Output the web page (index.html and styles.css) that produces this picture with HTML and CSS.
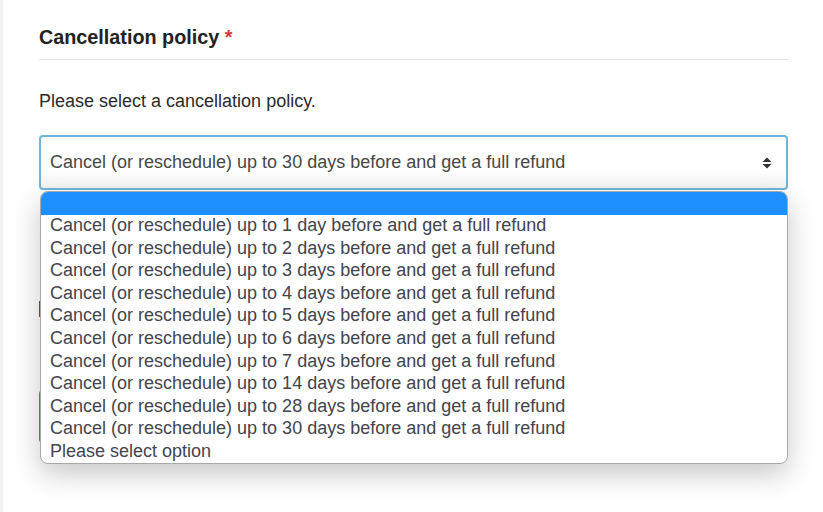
FILE: index.html
```html
<!DOCTYPE html>
<html lang="en">
<head>
  <meta charset="UTF-8" />
  <meta name="viewport" content="width=device-width, initial-scale=1.0"/>
  <title>Cancellation policy</title>
  <link rel="stylesheet" href="styles.css">
</head>
<body>
  <div class="side-strip"></div>

  <div class="page">
    <h2 class="field-title">Cancellation policy <span class="required">*</span></h2>

    <p class="field-help">Please select a cancellation policy.</p>

    <div class="select-wrap">
      <div class="select-box">
        <span class="select-value">Cancel (or reschedule) up to 30 days before and get a full refund</span>
        <svg class="select-arrows" width="10" height="12" viewBox="0 0 10 12">
          <path d="M5 0.5 L9.5 5 L0.5 5 Z" fill="#333"/>
          <path d="M0.5 7 L9.5 7 L5 11.5 Z" fill="#333"/>
        </svg>
      </div>

      <ul class="dropdown">
        <li class="option active">&nbsp;</li>
        <li class="option">Cancel (or reschedule) up to 1 day before and get a full refund</li>
        <li class="option">Cancel (or reschedule) up to 2 days before and get a full refund</li>
        <li class="option">Cancel (or reschedule) up to 3 days before and get a full refund</li>
        <li class="option">Cancel (or reschedule) up to 4 days before and get a full refund</li>
        <li class="option">Cancel (or reschedule) up to 5 days before and get a full refund</li>
        <li class="option">Cancel (or reschedule) up to 6 days before and get a full refund</li>
        <li class="option">Cancel (or reschedule) up to 7 days before and get a full refund</li>
        <li class="option">Cancel (or reschedule) up to 14 days before and get a full refund</li>
        <li class="option">Cancel (or reschedule) up to 28 days before and get a full refund</li>
        <li class="option">Cancel (or reschedule) up to 30 days before and get a full refund</li>
        <li class="option">Please select option</li>
      </ul>
    </div>

    <!-- covered by the open dropdown, only their left edges peek out -->
    <div class="field-error"></div>
    <button class="btn-danger" aria-label="Delete"></button>
  </div>
</body>
</html>
```

FILE: styles.css
```css
body {
  font-family: "Liberation Sans", Arial, sans-serif;
  background: #fff;
  margin: 0;
  padding: 0;
  display: flex;
  min-height: 100vh;
  overflow: hidden;
}

.side-strip {
  width: 3px;
  background: #f2f2f2;
  flex-shrink: 0;
}

.page {
  flex: 1;
  padding: 25px 35px 0 36px;
}

.field-title {
  margin: 0;
  font-size: 19.8px;
  line-height: 24px;
  font-weight: bold;
  color: #222;
  padding-bottom: 10px;
  border-bottom: 1px solid #e3e3e3;
}

.required {
  color: #d9343a;
}

.field-help {
  margin: 30px 0 0;
  font-size: 18px;
  line-height: 22px;
  color: #2b2b2b;
}

.select-wrap {
  position: relative;
  margin-top: 23px;
}

.select-box {
  height: 51px;
  border: 2px solid #70b6d6;
  border-radius: 4px;
  background: linear-gradient(to bottom, #fff 65%, #f4f4f4);
  display: flex;
  align-items: center;
  justify-content: space-between;
  padding: 0 14px 0 9px;
}

.select-value {
  font-size: 18px;
  color: #474747;
}

.select-arrows {
  display: block;
}

/* native-looking popup that lies over the form */
.dropdown {
  position: absolute;
  top: 100%;
  left: 1px;
  right: 0;
  margin: 1px 0 0;
  padding: 0;
  list-style: none;
  background: #fff;
  border: 1px solid #a8a8a8;
  border-radius: 8px;
  overflow: hidden;
  box-shadow: 0 10px 28px rgba(0, 0, 0, 0.22);
  z-index: 2;
}

.option {
  font-size: 18px;
  line-height: 20.6px;
  padding: 0.5px 9px 1.5px;
  color: #44444e;
  white-space: nowrap;
}

.option.active {
  background: #1e8fff;
}

.field-error {
  margin-top: 111px;
  height: 16px;
  width: 200px;
  border-left: 2px solid #8b4a2a;
}

.btn-danger {
  display: block;
  margin-top: 73px;
  width: 220px;
  height: 53px;
  border: none;
  border-radius: 4px;
  background: #c25e5e;
}
```
